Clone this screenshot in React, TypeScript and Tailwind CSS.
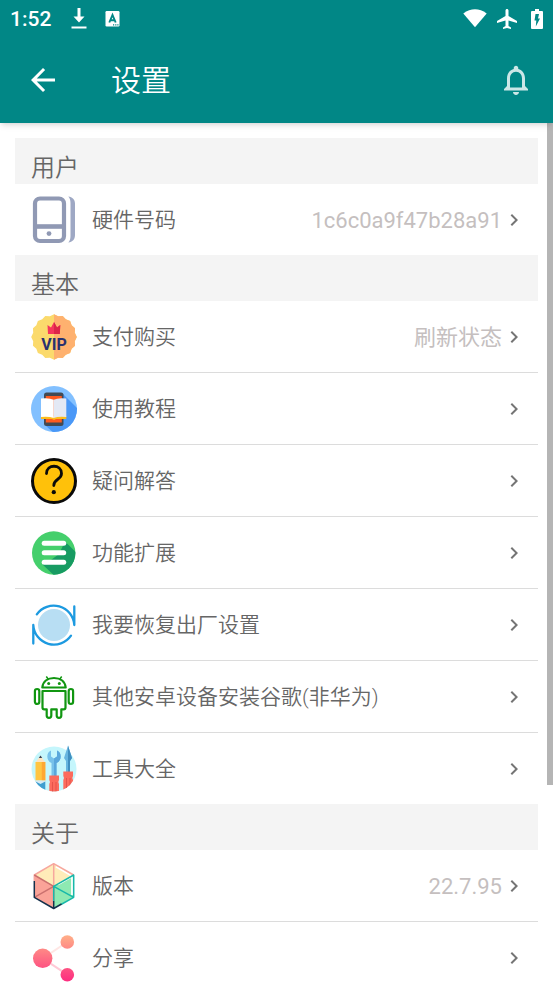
import type { ReactNode } from "react";
import {
  MdAirplanemodeActive,
  MdArrowBack,
  MdChevronRight,
  MdNotificationsNone,
} from "react-icons/md";

type Item = {
  label: string;
  icon: ReactNode;
  value?: string;
};

type Section = {
  title: string;
  items: Item[];
};

function Icon({ children }: { children: ReactNode }) {
  return (
    <svg viewBox="0 0 46 46" className="size-[46px] shrink-0 overflow-visible" aria-hidden="true">
      {children}
    </svg>
  );
}

function DeviceIcon() {
  return (
    <Icon>
      <rect x="4" y="1.5" width="29" height="42.5" rx="5" fill="none" stroke="#9099b4" strokeWidth="4.2" />
      <path d="M4 29.5H33" stroke="#9099b4" strokeWidth="4.6" />
      <circle cx="18" cy="36.6" r="2.4" fill="#9099b4" />
      <path d="M37.3 -0.5C41.5 0 44 2.500 44 6.500V38C44 42.500 41.5 45 37.3 45.500C38.800 44 39.500 42 39.500 39V6C39.500 3 38.800 1 37.300 -0.500Z" fill="#9ea8c4" />
    </Icon>
  );
}

// Scalloped edge: points alternate between two radii
const badgePoints = Array.from({ length: 32 }, (_, i) => {
  const r = i % 2 === 0 ? 22.8 : 21.2;
  const a = (i * Math.PI) / 16;
  return `${23 + r * Math.sin(a)},${23 - r * Math.cos(a)}`;
}).join(" ");

function VipIcon() {
  return (
    <Icon>
      <clipPath id="vip-right">
        <rect x="23" y="-1" width="24" height="48" />
      </clipPath>
      <polygon points={badgePoints} fill="#fbda6c" />
      <polygon points={badgePoints} fill="#feb16f" clipPath="url(#vip-right)" />
      <path d="M16.500 11L20 13.500L23 8L26 13.500L29.300 11L28.800 20H17Z" fill="#f5365c" />
      <path d="M23 8L26 13.500L29.300 11L28.800 20H23Z" fill="#dc2549" />
      <text x="23" y="35.500" textAnchor="middle" fontFamily="Roboto, sans-serif" fontSize="16" fontWeight="700" fill="#293270">
        VIP
      </text>
    </Icon>
  );
}

function TutorialIcon() {
  return (
    <Icon>
      <clipPath id="tutorial-clip">
        <circle cx="23" cy="23" r="23" />
      </clipPath>
      <circle cx="23" cy="23" r="23" fill="#82c0ff" />
      <path d="M32 8L50 26V50H26L14 39Z" fill="#4a98f7" clipPath="url(#tutorial-clip)" />
      <rect x="13" y="6.500" width="19.500" height="33.500" rx="2.500" fill="#424a54" />
      <rect x="14.800" y="10" width="16" height="26.500" fill="#ff5a1f" />
      <path d="M10 30H35.300V33H25L23 34L21 33H10Z" fill="#fcbc1c" />
      <path d="M10 12.500Q18 11.500 22.700 13.800V32Q18 30.300 10 31Z" fill="#fff" />
      <path d="M35.300 12.500Q27 11.500 22.700 13.800V32Q27 30.300 35.300 31Z" fill="#e3e8f4" />
    </Icon>
  );
}

function QuestionIcon() {
  return (
    <Icon>
      <circle cx="23" cy="23" r="21.500" fill="#ffc10a" stroke="#0a0a0a" strokeWidth="3" />
      <path d="M15.500 15.500C15.500 5.800 30.500 5.800 30.500 15.500C30.500 22 22.800 20.500 22.800 27.500" fill="none" stroke="#0a0a0a" strokeWidth="2.800" strokeLinecap="round" />
      <circle cx="22.800" cy="34.200" r="2.100" fill="#0a0a0a" />
    </Icon>
  );
}

function ExtendIcon() {
  return (
    <Icon>
      <clipPath id="extend-clip">
        <circle cx="22.700" cy="23" r="21.700" />
      </clipPath>
      <circle cx="22.700" cy="23" r="21.700" fill="#45cf6c" />
      <path d="M34 11.500L50 27V50H28L11.500 34.500L20 30L28 24Z" fill="#179b62" clipPath="url(#extend-clip)" />
      <rect x="10.700" y="10.800" width="24.500" height="5" rx="2.500" fill="#fff" />
      <rect x="10.700" y="20.300" width="24.500" height="5" rx="2.500" fill="#fff" />
      <rect x="10.700" y="29.800" width="24.500" height="5" rx="2.500" fill="#fff" />
    </Icon>
  );
}

function RestoreIcon() {
  return (
    <Icon>
      <circle cx="23" cy="23" r="16" fill="#b8def3" />
      <path
        d="M5.800 12.300A20.700 20.700 0 0 1 43.300 23V4.500M40 33.700A20.700 20.700 0 0 1 2.300 23V41.500"
        fill="none"
        stroke="#1d9ae0"
        strokeWidth="2.300"
        strokeLinecap="round"
        strokeLinejoin="round"
      />
    </Icon>
  );
}

function AndroidIcon() {
  return (
    <Icon>
      <g fill="none" stroke="#119611" strokeWidth="2.200" strokeLinejoin="round">
        <path d="M11.300 13.500C12 7 17 4 23 4S34 7 34.700 13.500Z" />
        <path d="M15.300 2.500L17.500 5.500M30.700 2.500L28.500 5.500" strokeWidth="1.500" />
        <path d="M11.500 17H34.500V33.500Q34.500 35.300 32.700 35.300H30.300V41.500A2.300 2.300 0 0 1 25.700 41.500V35.300H20.300V41.500A2.300 2.300 0 0 1 15.700 41.500V35.300H13.300Q11.500 35.300 11.500 33.500Z" />
        <rect x="3.900" y="15" width="4.400" height="15" rx="2.200" />
        <rect x="37.700" y="15" width="4.400" height="15" rx="2.200" />
      </g>
      <circle cx="17.700" cy="9.500" r="1.500" fill="#119611" />
      <circle cx="28.300" cy="9.500" r="1.500" fill="#119611" />
    </Icon>
  );
}

function ToolsIcon() {
  return (
    <Icon>
      <clipPath id="tools-clip">
        <path d="M-1 -1H47V23H45.500A22.500 22.500 0 0 1 0.500 23H-1Z" />
      </clipPath>
      <circle cx="23" cy="23" r="22.500" fill="#c5f6fc" />
      <g clipPath="url(#tools-clip)">
        <path d="M4.500 16.500L9.500 9.500L14.300 16.500Z" fill="#fde3c0" />
        <path d="M7.800 12L9.500 9.500L11.200 12Z" fill="#334155" />
        <rect x="4.500" y="16" width="9.800" height="18.500" fill="#ffc542" />
        <rect x="10.800" y="16" width="3.500" height="18.500" fill="#ffa733" />
        <rect x="4.500" y="34.500" width="9.800" height="3" fill="#d5e9f4" />
        <path d="M4.500 35.500L9.500 38L14.300 35.500V46H4.500Z" fill="#3f9ed0" />
        <path d="M20 4.500C15 6.500 15 14.500 20.500 17V30H25.500V17C31 14.500 31 6.500 26 4.500V10.500L23 12.500L20 10.500Z" fill="#77c1ea" />
        <path d="M23 12.500L26 10.500V4.500C31 6.500 31 14.500 25.500 17V30H23Z" fill="#5aa7dc" />
        <path d="M18.300 29.500H28V34L27.300 36L28 38V46H18.300V38L19 36L18.300 34Z" fill="#fc6b5d" />
        <path d="M21.500 36V46M25 36V46" stroke="#e5534b" strokeWidth="1" />
        <path d="M37 -0.500L41 12L39 15V26H35V15L33 12Z" fill="#67b6e0" />
        <path d="M37 -0.500L41 12L39 15V26H37Z" fill="#408fc0" />
        <path d="M32.300 25.500H42V30L41.300 32L42 34V44H32.300V34L33 32L32.300 30Z" fill="#fc6b5d" />
        <path d="M35.500 32V44M39 32V44" stroke="#e5534b" strokeWidth="1" />
      </g>
    </Icon>
  );
}

function CubeIcon() {
  return (
    <Icon>
      <path d="M22.700 0.700L42.700 12L22.700 23.300L3.300 12Z" fill="#ffecb9" />
      <path d="M3.300 12L22.700 23.300V45.500L3.300 34.300Z" fill="#faa398" />
      <path d="M42.700 12L22.700 23.300V45.500L42.700 34.300Z" fill="#8ee9b2" />
      <path d="M25 3.700L41 13V32M27 21.500L41 13.500" fill="none" stroke="#fff" strokeWidth="1.800" />
      <g fill="none" strokeWidth="1.500" strokeLinejoin="round">
        <path d="M3.300 18V12L22.700 0.700L42.700 12M22.700 0.700V23.300" stroke="#f7a79e" />
        <path d="M3.300 12L22.700 23.300L3.300 34.300M22.700 23.300V38" stroke="#ca716f" />
        <path d="M22.700 23.300L42.700 12V34.300L22.700 23.300V38M42.700 34.300L30 41.500" stroke="#17b8aa" />
        <path d="M3.300 18V34.300L22.700 45.500L30.500 41M22.700 38V45.500" stroke="#14304b" />
      </g>
    </Icon>
  );
}

function ShareIcon() {
  return (
    <Icon>
      <defs>
        <linearGradient id="share-fill" x1="0" y1="0" x2="0" y2="46" gradientUnits="userSpaceOnUse">
          <stop offset="0" stopColor="#ffb088" />
          <stop offset="1" stopColor="#fd2e80" />
        </linearGradient>
      </defs>
      <path d="M11.700 23.300L36.300 7" stroke="#ffe6e4" strokeWidth="2" />
      <path d="M11.700 23.300L36.300 39.700" stroke="#ffc9d6" strokeWidth="2" />
      <circle cx="11.700" cy="23.300" r="9.700" fill="url(#share-fill)" />
      <circle cx="36.300" cy="7" r="6.800" fill="url(#share-fill)" />
      <circle cx="36.300" cy="39.700" r="6.800" fill="url(#share-fill)" />
    </Icon>
  );
}

const sections: Section[] = [
  {
    title: "用户",
    items: [{ label: "硬件号码", icon: <DeviceIcon />, value: "1c6c0a9f47b28a91" }],
  },
  {
    title: "基本",
    items: [
      { label: "支付购买", icon: <VipIcon />, value: "刷新状态" },
      { label: "使用教程", icon: <TutorialIcon /> },
      { label: "疑问解答", icon: <QuestionIcon /> },
      { label: "功能扩展", icon: <ExtendIcon /> },
      { label: "我要恢复出厂设置", icon: <RestoreIcon /> },
      { label: "其他安卓设备安装谷歌(非华为)", icon: <AndroidIcon /> },
      { label: "工具大全", icon: <ToolsIcon /> },
    ],
  },
  {
    title: "关于",
    items: [
      { label: "版本", icon: <CubeIcon />, value: "22.7.95" },
      { label: "分享", icon: <ShareIcon /> },
    ],
  },
];

function StatusBar() {
  return (
    <div className="flex h-[38px] items-center justify-between pr-2.5 pl-2.5">
      <div className="flex items-center">
        <span className="text-[21px] leading-9 font-medium">1:52</span>
        {/* Download */}
        <svg viewBox="0 0 16 22" className="ml-5 h-[22px] w-4" fill="currentColor" aria-hidden="true">
          <path d="M6.500 0H9.500V8.500H13.500L8 14.500L2.500 8.500H6.500ZM0.500 18.500H15.500V20.500H0.500Z" />
        </svg>
        {/* Keyboard badge */}
        <svg viewBox="0 0 15 16" className="ml-[18px] h-4 w-[15px]" aria-hidden="true">
          <rect x="0.500" y="0" width="14" height="15.500" rx="1.200" fill="#fff" />
          <path d="M4.300 11.500L7.500 4L10.700 11.500M5.500 9.200H9.500" fill="none" stroke="#018786" strokeWidth="1.900" />
          <path d="M8 13.800H9.200M10.200 13.800H11.400M12.300 13.800H13.500" stroke="#018786" strokeWidth="1.200" />
        </svg>
      </div>
      <div className="flex items-center">
        {/* Wifi */}
        <svg viewBox="0 0 24 20" className="h-5 w-6" fill="currentColor" aria-hidden="true">
          <path d="M0.300 4.500Q12 -3.800 23.700 4.500L12 18.300Z" />
        </svg>
        <MdAirplanemodeActive className="ml-2 size-6" />
        {/* Battery */}
        <svg viewBox="0 0 12 21" className="ml-3 h-[21px] w-3" aria-hidden="true">
          <path d="M4 0H8V2H11Q12 2 12 3V19Q12 20 11 20H1Q0 20 0 19V3Q0 2 1 2H4Z" fill="#fff" />
          <path d="M4.500 5H8L7 9.500H9L4.800 17.500L5.300 11.500H3.500Z" fill="#018786" />
        </svg>
      </div>
    </div>
  );
}

function SettingRow({ item, last }: { item: Item; last: boolean }) {
  return (
    <li className={last ? "" : "border-b border-[#dcdcdc]"}>
      <button type="button" className="flex h-[71px] w-full items-center pr-3 pl-4 text-left">
        {item.icon}
        <span className="ml-[15px] flex-1 pt-[3px] text-[21px] font-[350] text-[#666666]">{item.label}</span>
        {item.value && <span className="pt-0.5 text-[22px] text-[#c5bfbf]">{item.value}</span>}
        <MdChevronRight className="size-6 shrink-0 text-[#757575]" />
      </button>
    </li>
  );
}

export default function App() {
  return (
    <div className="relative flex h-screen flex-col overflow-hidden bg-white font-['Roboto','Noto_Sans_CJK_SC',sans-serif]">
      <header className="z-10 shrink-0 bg-[#018786] text-white shadow-md">
        <StatusBar />
        <div className="flex h-[85px] items-center pr-[19px] pb-0.5 pl-[25px]">
          <button type="button" aria-label="返回">
            <MdArrowBack className="size-9" />
          </button>
          <h1 className="ml-[50px] flex-1 pt-0.5 text-[30px] leading-9 font-[350]">设置</h1>
          <button type="button" aria-label="通知" className="text-white/80">
            <MdNotificationsNone className="size-9" />
          </button>
        </div>
      </header>

      <div className="relative min-h-0 flex-1">
        <main className="h-full overflow-y-auto px-[15px] pt-[15px] [scrollbar-width:none]">
          {sections.map((section) => (
            <section key={section.title}>
              <h2 className="h-[46px] bg-[#f4f4f4] pt-3.5 pl-4 text-2xl font-[350] text-[#666666]">{section.title}</h2>
              <ul>
                {section.items.map((item, i) => (
                  <SettingRow key={item.label} item={item} last={i === section.items.length - 1} />
                ))}
              </ul>
            </section>
          ))}
        </main>
        {/* Scroll thumb */}
        <div className="absolute top-0 right-0 h-[77%] w-1.5 bg-[#b5b5b5]" />
      </div>
    </div>
  );
}
